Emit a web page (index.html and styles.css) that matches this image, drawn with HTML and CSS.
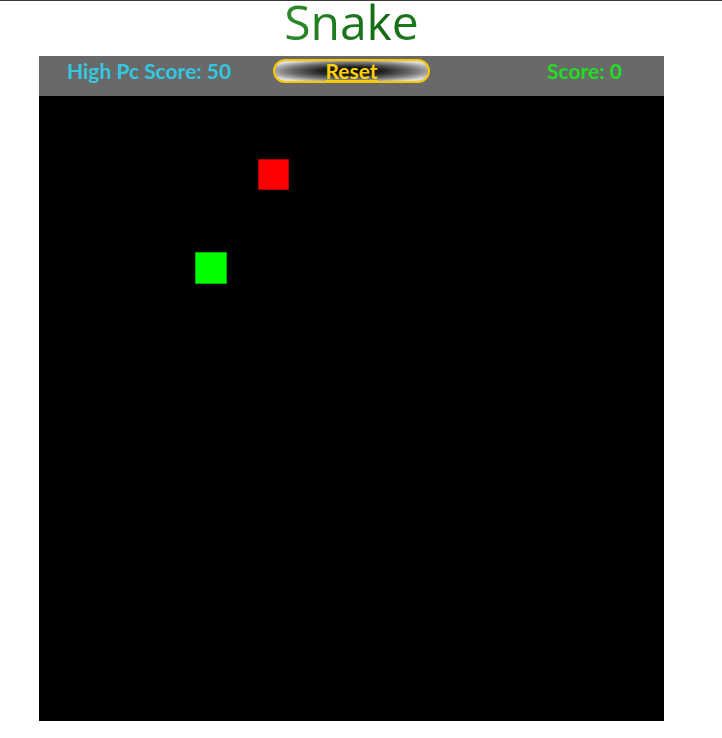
FILE: index.html
```html
<!DOCTYPE html>
<html>
<head>
<meta charset="utf-8">
<link rel="stylesheet" href="styles.css">
</head>
<body>
<div class="topline"></div>
<main class="page">
  <h1 class="title">Snake</h1>
  <section class="game">
    <header class="bar">
      <span class="high">High Pc Score: 50</span>
      <a class="reset" href="#">Reset</a>
      <span class="score">Score: 0</span>
    </header>
    <div class="board">
      <div class="cell food" style="grid-column: 8; grid-row: 3;"></div>
      <div class="cell snake" style="grid-column: 6; grid-row: 6;"></div>
    </div>
  </section>
</main>
</body>
</html>
```
FILE: styles.css
```css
html, body {
  margin: 0;
  padding: 0;
  background: #ffffff;
}
.topline {
  height: 1px;
  background: #3a3a3a;
}
.page {
  width: 625px;
  margin-left: 39px;
  font-family: "Open Sans", "Noto Sans", sans-serif;
}
.title {
  margin: 0;
  height: 55px;
  box-sizing: border-box;
  padding-top: 4px;
  text-align: center;
  font-family: "Open Sans", sans-serif;
  font-weight: 400;
  font-size: 48px;
  line-height: 34px;
  background: linear-gradient(100deg, #3a9a3a 0%, #55b855 22%, #2a8a2a 40%, #126a12 55%, #4aad4a 75%, #1e7e1e 100%);
  -webkit-background-clip: text;
  background-clip: text;
  color: transparent;
}
.bar {
  height: 40px;
  box-sizing: border-box;
  padding-top: 3px;
  background: #696969;
  display: flex;
  align-items: flex-start;
  font-family: "Lato", sans-serif;
  font-weight: 700;
  font-size: 21px;
  line-height: 23px;
}
.high {
  color: #33c8e0;
  width: 234px;
  padding-left: 28px;
  box-sizing: border-box;
}
.reset {
  width: 157px;
  height: 24px;
  box-sizing: border-box;
  border: 2px solid #f5c800;
  border-radius: 12px;
  background: radial-gradient(ellipse 60% 60% at center, #000 0%, #222 35%, #777 70%, #ccc 95%, #ddd 100%);
  color: #ffd000;
  text-align: center;
  line-height: 19px;
  text-decoration: underline;
  text-decoration-thickness: 1px;
}
.score {
  color: #22dd22;
  margin-left: auto;
  padding-right: 42px;
}
.board {
  height: 625px;
  background: #000;
  display: grid;
  grid-template-columns: repeat(20, 31.25px);
  grid-template-rows: repeat(20, 31.25px);
}
.cell {
  box-sizing: border-box;
}
.food {
  background: #ff0000;
  border: 1px solid #b00000;
}
.snake {
  background: #00ff00;
  border: 1px solid #00b000;
}
```
